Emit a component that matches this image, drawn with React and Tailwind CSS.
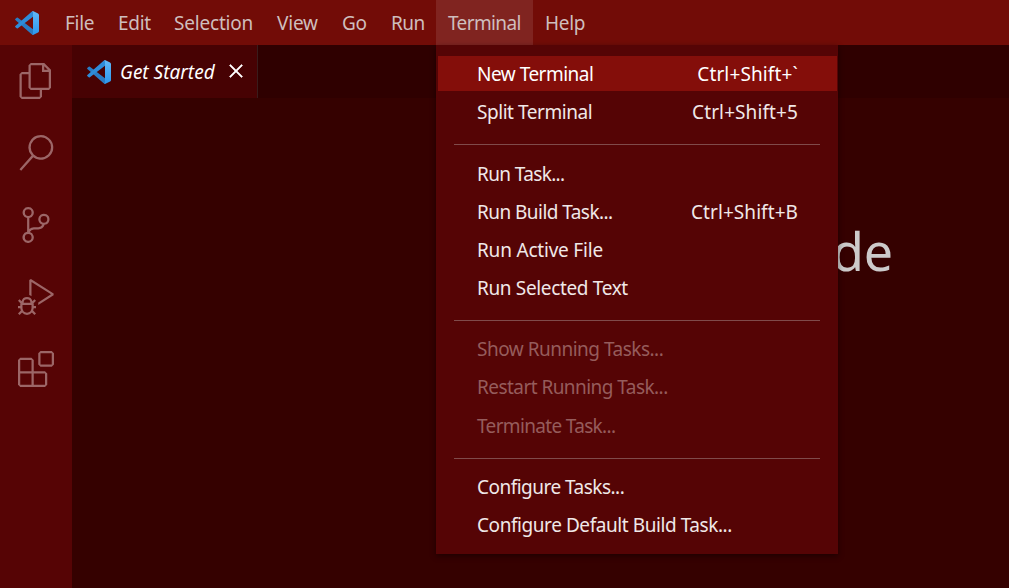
import React, { useId } from "react";
import {
  VscFiles,
  VscSearch,
  VscSourceControl,
  VscDebugAlt,
  VscExtensions,
  VscClose,
} from "react-icons/vsc";

function Logo() {
  const id = useId();
  return (
    <svg viewBox="0 0 100 100" className="h-6 w-6 shrink-0">
      <defs>
        <linearGradient id={id} x1="0" y1="0" x2="0" y2="1">
          <stop offset="0" stopColor="#62b8f5" />
          <stop offset="1" stopColor="#2c97ee" />
        </linearGradient>
      </defs>
      <path d="M1 33 L7 28 Q9.500 26.500 12 28.500 L75 76 L75 99 Q71 99 68 96 L1.500 38 Q-0.500 35.500 1 33Z" fill="#2a7cc4" />
      <path d="M1 67 L7 72 Q9.500 73.500 12 71.500 L75 24 L75 1 Q71 1 68 4 L1.500 62 Q-0.500 64.500 1 67Z" fill="#2f8cd8" />
      <path d="M71 99 Q75 97.500 75 93 L75 7 Q75 2.500 71 1 Q74 -0.500 77 1 L96 10 Q100 12 100 17 L100 83 Q100 88 96 90 L77 99 Q74 100.500 71 99Z" fill={`url(#${id})`} />
    </svg>
  );
}

const menus = [
  { label: "File", box: "w-[53px]", text: "tracking-[-0.3px]" },
  { label: "Edit", box: "w-[56px]", text: "tracking-[-0.3px]" },
  { label: "Selection", box: "w-[103px]", text: "tracking-[-0.2px]" },
  { label: "View", box: "w-[65px]", text: "tracking-[-0.2px]" },
  { label: "Go", box: "w-[49px]", text: "tracking-[-0.25px]" },
  { label: "Run", box: "w-[57px]", text: "tracking-[-0.5px]" },
  { label: "Terminal", box: "w-[97px]", text: "tracking-[-0.62px]", active: true },
  { label: "Help", box: "w-[64px]", text: "tracking-[-0.3px]" },
];

const groups = [
  {
    divider: "",
    items: [
      { label: "New Terminal", keys: "Ctrl+Shift+`", text: "tracking-[-0.5px]", keyText: "tracking-[0.13px]", selected: true },
      { label: "Split Terminal", keys: "Ctrl+Shift+5", text: "tracking-[-0.45px]", keyText: "tracking-[0.1px]" },
    ],
  },
  {
    divider: "h-[24.6px] pt-[13px]",
    items: [
      { label: "Run Task...", text: "tracking-[-0.63px]" },
      { label: "Run Build Task...", keys: "Ctrl+Shift+B", text: "tracking-[-0.55px]", keyText: "tracking-[0.07px]" },
      { label: "Run Active File", text: "tracking-[-0.2px]" },
      { label: "Run Selected Text", text: "tracking-[-0.35px]" },
    ],
  },
  {
    divider: "h-[23px] pt-[12.3px]",
    items: [
      { label: "Show Running Tasks...", text: "tracking-[-0.5px]", disabled: true },
      { label: "Restart Running Task...", text: "tracking-[-0.55px]", disabled: true },
      { label: "Terminate Task...", text: "relative top-px tracking-[-0.66px]", disabled: true },
    ],
  },
  {
    divider: "h-[23.8px] pt-[13px]",
    items: [
      { label: "Configure Tasks...", text: "tracking-[-0.52px]" },
      { label: "Configure Default Build Task...", text: "tracking-[-0.43px]" },
    ],
  },
];

const activities = [VscFiles, VscSearch, VscSourceControl, VscDebugAlt, VscExtensions];

function MenuItem({ item }) {
  const color = item.disabled ? "text-[#955c5c]" : item.selected ? "text-white" : "text-[#f0e8e8]";
  return (
    <div className={`flex h-[38px] items-start pt-px ${color}`}>
      <div className={`ml-px flex h-[35px] flex-1 items-center justify-between pt-px pr-[39px] pl-[39px] ${item.selected ? "bg-[#840e0a]" : ""}`}>
        <span className={item.text}>{item.label}</span>
        {item.keys && <span className={item.keyText}>{item.keys}</span>}
      </div>
    </div>
  );
}

function TerminalMenu() {
  return (
    <div className="absolute top-[45px] left-[436px] h-[509px] w-[402px] bg-[#550405] px-px pt-[10px] shadow-[0_2px_6px_rgba(0,0,0,0.45)]">
      {groups.map((group, i) => (
        <React.Fragment key={i}>
          {i > 0 && (
            <div className={`flex items-start pr-[17px] pl-[17px] ${group.divider}`}>
              <div className="h-px w-full bg-[#804b4b]" />
            </div>
          )}
          {group.items.map((item) => (
            <MenuItem key={item.label} item={item} />
          ))}
        </React.Fragment>
      ))}
    </div>
  );
}

export default function App() {
  return (
    <div className="relative flex h-[588px] w-[1009px] flex-col overflow-hidden bg-[#350100] font-['Noto_Sans',sans-serif] text-[19px] leading-none whitespace-nowrap">
      <header className="flex h-[45px] shrink-0 items-stretch bg-[#720c07] text-[#cfbebd]">
        <div className="flex w-[53px] items-center pl-[15px]">
          <Logo />
        </div>
        {menus.map((m) => (
          <div key={m.label} className={`flex items-center pt-0.5 pl-3 ${m.box} ${m.active ? "bg-[#802420]" : ""}`}>
            <span className={m.text}>{m.label}</span>
          </div>
        ))}
      </header>
      <div className="flex min-h-0 flex-1">
        <nav className="flex w-[72px] shrink-0 flex-col items-center bg-[#560405] text-[#9c6667]">
          {activities.map((Icon, i) => (
            <div key={i} className="flex h-[72px] items-center justify-center">
              <Icon className="h-9 w-9" />
            </div>
          ))}
        </nav>
        <main className="flex min-w-0 flex-1 flex-col">
          <div className="flex h-[53px] shrink-0 bg-[#2f0000]">
            <div className="flex w-[186px] items-center border-r border-[#3a1c1c] bg-[#470203] pl-[15px] text-white">
              <Logo />
              <span className="ml-[9px] w-[104px] pt-px italic">Get Started</span>
              <VscClose className="-mt-0.5 h-6 w-6 stroke-[0.4]" />
            </div>
          </div>
          <div className="flex justify-end pt-[126px] pr-[116px]">
            <h1 className="text-[52px] leading-[54px] tracking-[-0.2px] text-[#cccaca]">de</h1>
          </div>
        </main>
      </div>
      <TerminalMenu />
    </div>
  );
}
